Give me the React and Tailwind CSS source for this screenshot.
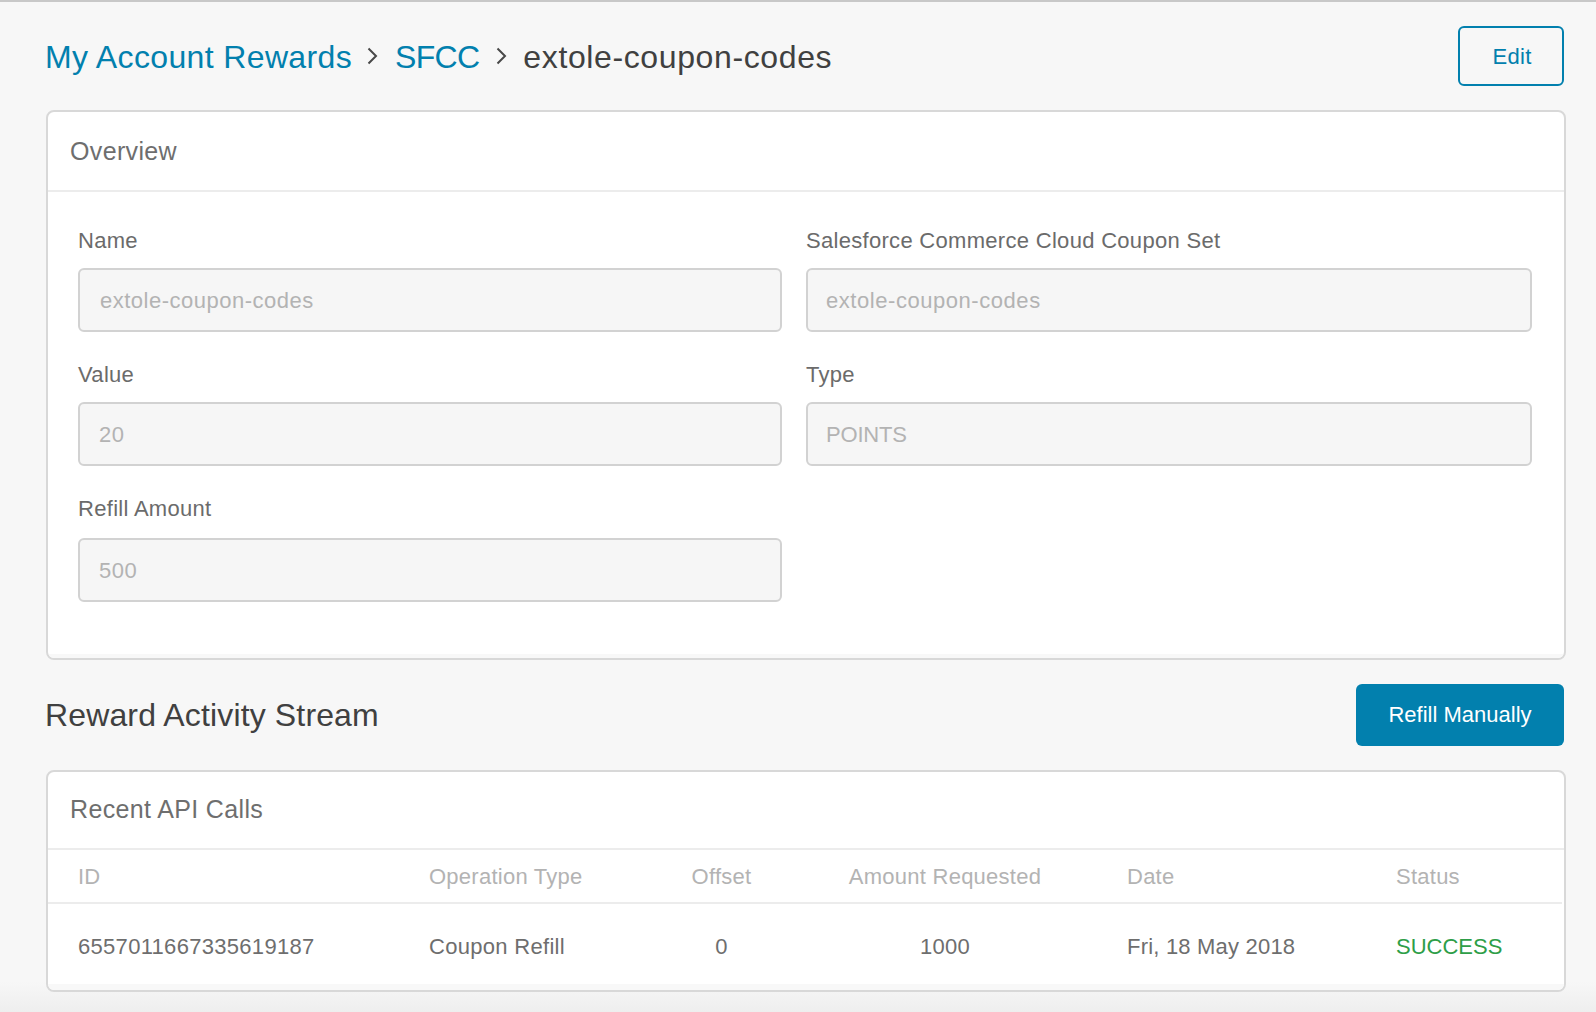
import React from "react";

function Chevron() {
  return (
    <svg width="11" height="18" viewBox="0 0 11 18" fill="none" className="shrink-0">
      <path d="M1.5 1.5L9 9L1.5 16.5" stroke="#484848" strokeWidth="2" />
    </svg>
  );
}

function Field({ label, value, labelClass = "mb-[12px]", inputClass = "pl-[20px] tracking-[0.5px]" }) {
  return (
    <div>
      <label className={`block h-[30px] text-[22px] leading-[30px] tracking-[0.3px] text-[#6b6b6b] ${labelClass}`}>
        {label}
      </label>
      <input
        readOnly
        value={value}
        className={`block h-[64px] w-full rounded-[6px] border-2 border-[#d2d2d2] bg-[#f6f6f6] pt-[2px] text-[22px] text-[#b3b3b3] outline-none ${inputClass}`}
      />
    </div>
  );
}

function CardHeader({ title, className }) {
  return (
    <div
      className={`-ml-[2px] flex items-center border-b-2 border-[#ececec] pl-[24px] text-[25px] tracking-[0.35px] text-[#6e6e6e] ${className}`}
    >
      {title}
    </div>
  );
}

const th = "h-[54px] border-b-2 border-[#ececec] pl-[30px] text-[22px] font-normal tracking-[0.25px] text-[#b3b3b3]";
const td = "h-[80px] pl-[30px] pt-[4px] text-[22px] tracking-[0.3px] text-[#6e6e6e]";

export default function App() {
  return (
    <div className="min-h-[1012px] border-t-2 border-[#c8c8c8] bg-[linear-gradient(to_bottom,#f7f7f7_0,#f7f7f7_97%,#eeeeee_100%)] pl-[46px] pr-[30px] font-['Liberation_Sans',Arial,sans-serif]">
      <div className="flex items-center justify-between pt-[24px]">
        <nav className="-ml-[1px] flex items-center pt-[2px] text-[32px]">
          <a className="tracking-[0.36px] text-[#0280ae]">My Account Rewards</a>
          <span className="-mt-[2px] ml-[15px] mr-[17px]"><Chevron /></span>
          <a className="tracking-[-0.7px] text-[#0280ae]">SFCC</a>
          <span className="-mt-[2px] ml-[17px] mr-[16px]"><Chevron /></span>
          <span className="tracking-[0.62px] text-[#404040]">extole-coupon-codes</span>
        </nav>
        <button className="mr-[2px] h-[60px] w-[106px] rounded-[6px] border-2 border-[#0280ae] pl-[2px] text-[22px] tracking-[0.3px] text-[#0280ae]">
          Edit
        </button>
      </div>

      <section className="mt-[24px] h-[550px] overflow-hidden rounded-[8px] border-2 border-[#d8d8d8] bg-white">
        <CardHeader title="Overview" className="h-[80px] pt-[2px]" />
        <div className="grid h-[462px] grid-cols-[704px_726px] content-start gap-x-[24px] gap-y-[28px] px-[30px] pt-[34px]">
          <Field label="Name" value="extole-coupon-codes" />
          <Field label="Salesforce Commerce Cloud Coupon Set" value="extole-coupon-codes" inputClass="pl-[18px] tracking-[0.55px]" />
          <Field label="Value" value="20" inputClass="pl-[19px] tracking-[0.5px]" />
          <Field label="Type" value="POINTS" inputClass="pl-[18px] tracking-[-0.18px]" />
          <Field label="Refill Amount" value="500" labelClass="mb-[14px]" inputClass="pl-[19px] tracking-[0.5px]" />
        </div>
        <div className="h-[4px] bg-[#f8f8f8]" />
      </section>

      <div className="mt-[24px] flex items-center justify-between">
        <h2 className="-ml-[1px] text-[32px] tracking-[0.14px] text-[#404040]">Reward Activity Stream</h2>
        <button className="mr-[2px] h-[62px] w-[208px] rounded-[6px] bg-[#0280ae] pb-[2px] text-[22px] text-white">
          Refill Manually
        </button>
      </div>

      <section className="mt-[24px] h-[222px] overflow-hidden rounded-[8px] border-2 border-[#d8d8d8] bg-white">
        <CardHeader title="Recent API Calls" className="h-[78px]" />
        <table className="-ml-[2px] w-[1516px] table-fixed border-separate border-spacing-0 text-left">
          <colgroup>
            <col className="w-[353px]" />
            <col className="w-[251px]" />
            <col className="w-[143px]" />
            <col className="w-[304px]" />
            <col className="w-[270px]" />
            <col className="w-[195px]" />
          </colgroup>
          <thead>
            <tr>
              <th className={`${th} !pl-[32px]`}>ID</th>
              <th className={th}>Operation Type</th>
              <th className={`${th} !pl-0 text-center`}>Offset</th>
              <th className={`${th} !pl-0 text-center`}>Amount Requested</th>
              <th className={th}>Date</th>
              <th className={`${th} !pl-[29px]`}>Status</th>
            </tr>
          </thead>
          <tbody>
            <tr>
              <td className={`${td} !pl-[32px]`}>6557011667335619187</td>
              <td className={td}>Coupon Refill</td>
              <td className={`${td} !pl-0 text-center`}>0</td>
              <td className={`${td} !pl-0 text-center`}>1000</td>
              <td className={`${td} !tracking-[0.2px]`}>Fri, 18 May 2018</td>
              <td className={`${td} !pl-[29px] !tracking-normal !text-[#2e9e48]`}>SUCCESS</td>
            </tr>
          </tbody>
        </table>
        <div className="h-[6px] bg-[#f8f8f8]" />
      </section>
    </div>
  );
}
